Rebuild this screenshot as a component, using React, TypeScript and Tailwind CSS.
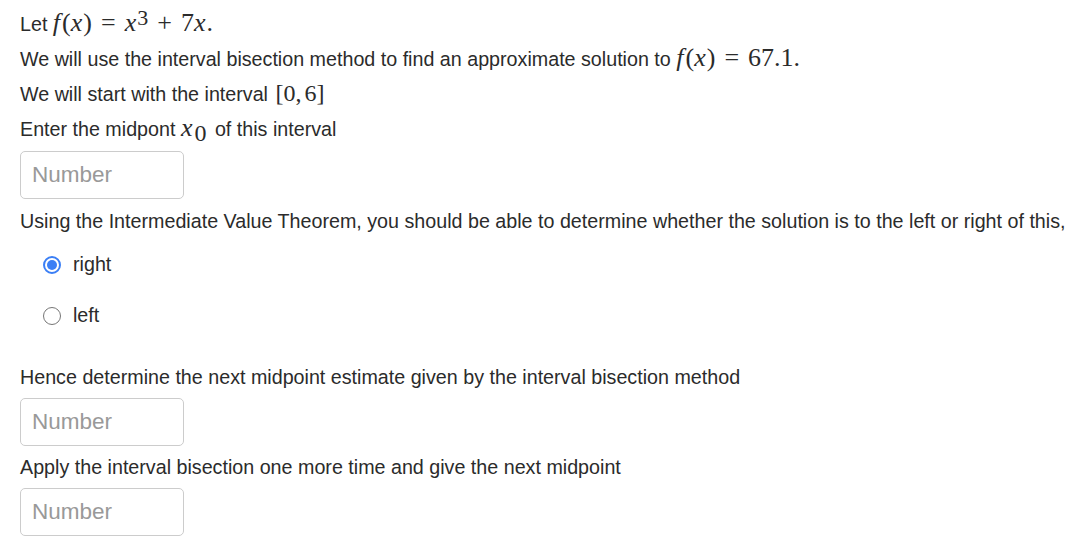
import { ReactNode } from "react";

const mathFont = { fontFamily: '"Liberation Serif", "DejaVu Serif", serif' };

function Mi({ children }: { children: ReactNode }) {
  return (
    <span className="italic" style={mathFont}>
      {children}
    </span>
  );
}

function Mn({ children, className = "" }: { children: ReactNode; className?: string }) {
  return (
    <span className={className} style={mathFont}>
      {children}
    </span>
  );
}

function Line({ children, className = "" }: { children: ReactNode; className?: string }) {
  return <div className={`h-[35px] leading-[35px] whitespace-nowrap ${className}`}>{children}</div>;
}

function NumberInput({ className = "" }: { className?: string }) {
  return (
    <input
      type="text"
      placeholder="Number"
      className={`block w-[164px] h-[48px] px-[11px] border border-[#cccccc] rounded-[5px] text-[22.5px] text-[#333] placeholder:text-[#999999] bg-white outline-none ${className}`}
    />
  );
}

function Radio({ label, checked }: { label: string; checked?: boolean }) {
  return (
    <label className="flex items-center h-full pl-[23px] gap-[12px]">
      {checked ? (
        <span className="w-[18px] h-[18px] rounded-full border-2 border-[#3b7ff5] flex items-center justify-center">
          <span className="w-[10px] h-[10px] rounded-full bg-[#3b7ff5]" />
        </span>
      ) : (
        <span className="w-[18px] h-[18px] rounded-full border-[1.5px] border-[#767676]" />
      )}
      <span>{label}</span>
    </label>
  );
}

export default function App() {
  return (
    <div
      className="w-[1090px] h-[550px] overflow-hidden bg-white text-[19.7px] text-[#2b2b2b] pl-[20px] pt-[5px]"
      style={{ fontFamily: '"Liberation Sans", Arial, sans-serif' }}
    >
      <Line>
        Let{" "}
        <span className="text-[26px]">
          <Mi>f</Mi>
          <Mn className="ml-[2px]">(</Mn>
          <Mi>x</Mi>
          <Mn className="ml-[1px]">)</Mn>
          <Mn className="mx-[9px]">=</Mn>
          <Mi>x</Mi>
          <sup className="text-[22px] relative -top-[6px] ml-[1px]" style={mathFont}>3</sup>
          <Mn className="mx-[9px]">+</Mn>
          <Mn>7</Mn>
          <Mi>x</Mi>
          <Mn className="ml-[1px]">.</Mn>
        </span>
      </Line>
      <Line>
        We will use the interval bisection method to find an approximate solution to{" "}
        <span className="text-[26px]">
          <Mi>f</Mi>
          <Mn className="ml-[2px]">(</Mn>
          <Mi>x</Mi>
          <Mn className="ml-[1px]">)</Mn>
          <Mn className="mx-[9px]">=</Mn>
          <Mn>67.1.</Mn>
        </span>
      </Line>
      <Line>
        We will start with the interval{" "}
        <span className="text-[24px] ml-[2px]">
          <Mn>[0,</Mn>
          <Mn className="ml-[3px]">6]</Mn>
        </span>
      </Line>
      <Line>
        Enter the midpont{" "}
        <span className="text-[26px]">
          <Mi>x</Mi>
          <sub className="text-[24px] relative top-[5px] ml-[2px] mr-[3px]" style={mathFont}>0</sub>
        </span>{" "}
        of this interval
      </Line>
      <NumberInput className="mt-[6px]" />
      <Line className="mt-[5px]">
        Using the Intermediate Value Theorem, you should be able to determine whether the solution is to the left or right of this,
      </Line>
      <div className="h-[34px] mt-[9px]">
        <Radio label="right" checked />
      </div>
      <div className="h-[34px] mt-[17px]">
        <Radio label="left" />
      </div>
      <Line className="mt-[27px]">Hence determine the next midpoint estimate given by the interval bisection method</Line>
      <NumberInput className="mt-[3px]" />
      <Line className="mt-[4px]">Apply the interval bisection one more time and give the next midpoint</Line>
      <NumberInput className="mt-[3px]" />
    </div>
  );
}
